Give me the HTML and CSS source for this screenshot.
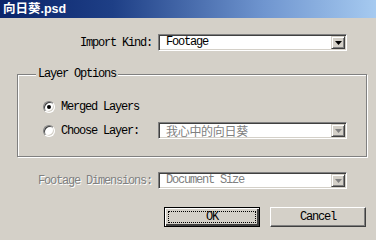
FILE: index.html
```html
<!DOCTYPE html>
<html>
<head>
<meta charset="utf-8">
<link rel="stylesheet" href="styles.css">
</head>
<body>
<div class="dialog">
  <div class="titlebar">向日葵.psd</div>

  <div class="row row-kind">
    <div class="label">Import Kind:</div>
    <div class="select">
      <span class="value">Footage</span>
      <span class="drop"><svg width="7" height="4" viewBox="0 0 7 4"><polygon points="0,0 7,0 3.5,4" fill="#000"/></svg></span>
    </div>
  </div>

  <div class="group">
    <span class="group-title">Layer Options</span>
    <div class="opt opt-first">
      <span class="radio checked"><span class="dot"></span></span>
      <span class="opt-text">Merged Layers</span>
    </div>
    <div class="opt opt-second">
      <span class="radio"></span>
      <span class="opt-text opt-wide">Choose Layer:</span>
      <div class="select disabled">
        <span class="value cjk">我心中的向日葵</span>
        <span class="drop"><svg width="7" height="4" viewBox="0 0 7 4"><polygon points="0,0 7,0 3.5,4" fill="#808080"/></svg></span>
      </div>
    </div>
  </div>

  <div class="row row-dim">
    <div class="label label-disabled">Footage Dimensions:</div>
    <div class="select disabled">
      <span class="value">Document Size</span>
      <span class="drop"><svg width="7" height="4" viewBox="0 0 7 4"><polygon points="0,0 7,0 3.5,4" fill="#808080"/></svg></span>
    </div>
  </div>

  <div class="buttons">
    <div class="btn btn-default"><span class="focus">OK</span></div>
    <div class="btn">Cancel</div>
  </div>
</div>
</body>
</html>
```

FILE: styles.css
```css
html, body {
  margin: 0;
  padding: 0;
  background: #d4d0c8;
}
.dialog {
  width: 376px;
  height: 240px;
  background: #d4d0c8;
  font-family: "Liberation Mono", "Noto Sans CJK SC", monospace;
  font-size: 12px;
  letter-spacing: -1.2px;
  color: #000;
  overflow: hidden;
}
.titlebar {
  height: 18px;
  line-height: 18px;
  padding-left: 3px;
  background: linear-gradient(to right, #0a246a 0%, #1e3f86 30%, #6f95cf 70%, #a6caf0 100%);
  color: #fff;
  font-family: "Liberation Sans", "Noto Sans CJK SC", sans-serif;
  font-weight: bold;
  font-size: 12.5px;
  letter-spacing: 0;
}
.row {
  display: flex;
  align-items: center;
  height: 17px;
}
.row-kind {
  margin-top: 16px;
}
.label {
  width: 152px;
  text-align: right;
  margin-right: 6px;
  white-space: nowrap;
}
.label-disabled {
  color: #808080;
  text-shadow: 1px 1px 0 #fff;
}
.select {
  width: 189px;
  height: 17px;
  box-sizing: border-box;
  background: #fff;
  border-top: 1px solid #808080;
  border-left: 1px solid #808080;
  border-right: 1px solid #fff;
  border-bottom: 1px solid #fff;
  box-shadow: inset 1px 1px 0 #404040, inset -1px -1px 0 #d4d0c8;
  display: flex;
  align-items: center;
}
.select .value {
  flex: 1;
  padding-left: 7px;
  white-space: nowrap;
  line-height: 15px;
}
.select.disabled .value {
  color: #808080;
}
.value.cjk {
  font-family: "Noto Sans CJK SC", sans-serif;
  font-size: 12px;
  letter-spacing: -0.3px;
}
.drop {
  width: 14px;
  height: 13px;
  box-sizing: border-box;
  margin-right: 1px;
  background: #d4d0c8;
  border-top: 1px solid #d4d0c8;
  border-left: 1px solid #d4d0c8;
  border-right: 1px solid #404040;
  border-bottom: 1px solid #404040;
  box-shadow: inset 1px 1px 0 #fff, inset -1px -1px 0 #808080;
  display: flex;
  align-items: center;
  justify-content: center;
}
.drop svg {
  display: block;
  margin-top: 1px;
}
.group {
  margin: 23px 9px 0 17px;
  height: 83px;
  box-sizing: border-box;
  border: 1px solid #808080;
  box-shadow: inset 1px 1px 0 #fff, 1px 1px 0 #fff;
}
.group-title {
  display: inline-block;
  height: 14px;
  line-height: 14px;
  margin-top: -8px;
  margin-left: 18px;
  padding: 0 2px;
  background: #d4d0c8;
  vertical-align: top;
}
.opt {
  display: flex;
  align-items: center;
  padding-left: 25px;
  height: 17px;
}
.opt-first {
  margin-top: 9px;
}
.opt-second {
  margin-top: 7px;
}
.radio {
  width: 12px;
  height: 12px;
  box-sizing: border-box;
  border-radius: 50%;
  background: #fff;
  border: 1px solid;
  border-color: #808080 #fff #fff #808080;
  box-shadow: inset 1px 1px 0 #404040, inset -1px -1px 0 #d4d0c8;
  display: flex;
  align-items: center;
  justify-content: center;
  margin-right: 6px;
  flex-shrink: 0;
}
.dot {
  width: 4px;
  height: 4px;
  border-radius: 50%;
  background: #000;
}
.opt-wide {
  width: 97px;
}
.row-dim {
  margin-top: 15px;
}
.buttons {
  display: flex;
  justify-content: flex-end;
  gap: 10px;
  margin-top: 18px;
  padding-right: 10px;
}
.btn {
  width: 96px;
  height: 20px;
  box-sizing: border-box;
  border-top: 1px solid #fff;
  border-left: 1px solid #fff;
  border-right: 1px solid #404040;
  border-bottom: 1px solid #404040;
  box-shadow: inset -1px -1px 0 #808080;
  display: flex;
  align-items: center;
  justify-content: center;
  line-height: 14px;
}
.btn-default {
  border: 1px solid #000;
  box-shadow: inset 1px 1px 0 #fff, inset -2px -2px 0 #404040, inset -1px -1px 0 #808080;
  padding: 3px;
}
.focus {
  flex: 1;
  align-self: stretch;
  border: 1px dotted #000;
  display: flex;
  align-items: center;
  justify-content: center;
}
```
